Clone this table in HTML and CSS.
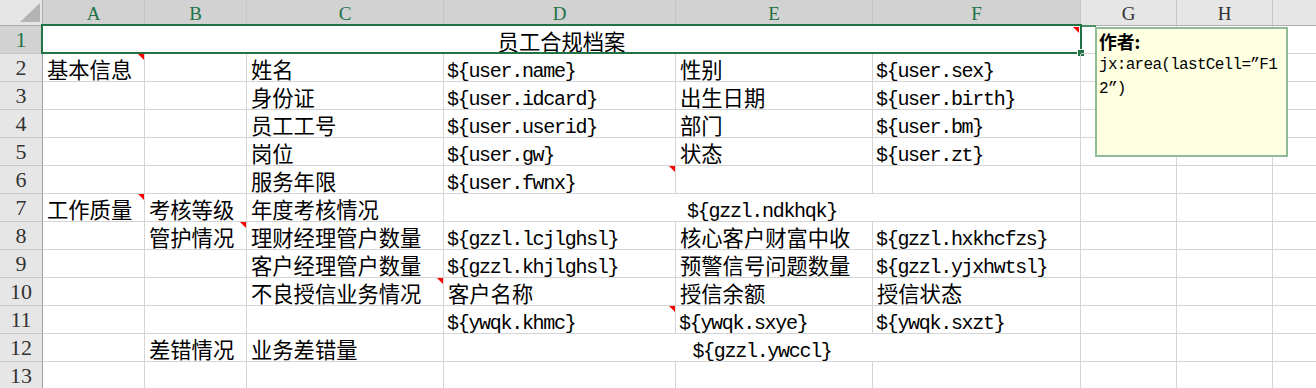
FILE: index.html
```html
<!DOCTYPE html>
<html lang="zh-CN">
<head>
<meta charset="utf-8">
<title>员工合规档案</title>
<link rel="stylesheet" href="styles.css">
</head>
<body>
<div class="sheet">
  <!-- header row -->
  <div class="corner"><span class="tri"></span></div>
  <div class="ch sel">A</div>
  <div class="ch sel">B</div>
  <div class="ch sel">C</div>
  <div class="ch sel">D</div>
  <div class="ch sel">E</div>
  <div class="ch sel">F</div>
  <div class="ch">G</div>
  <div class="ch">H</div>
  <div class="ch"></div>

  <!-- row 1 -->
  <div class="rh sel">1</div>
  <div class="cell t center span6 cm active">员工合规档案<span class="selbox"></span><span class="handle"></span></div>
  <div class="cell"></div><div class="cell"></div><div class="cell"></div>

  <!-- row 2 -->
  <div class="rh">2</div>
  <div class="cell t cm">基本信息</div>
  <div class="cell"></div>
  <div class="cell t">姓名</div>
  <div class="cell c">${user.name}</div>
  <div class="cell t">性别</div>
  <div class="cell c">${user.sex}</div>
  <div class="cell"></div><div class="cell"></div><div class="cell"></div>

  <!-- row 3 -->
  <div class="rh">3</div>
  <div class="cell"></div>
  <div class="cell"></div>
  <div class="cell t">身份证</div>
  <div class="cell c">${user.idcard}</div>
  <div class="cell t">出生日期</div>
  <div class="cell c">${user.birth}</div>
  <div class="cell"></div><div class="cell"></div><div class="cell"></div>

  <!-- row 4 -->
  <div class="rh">4</div>
  <div class="cell"></div>
  <div class="cell"></div>
  <div class="cell t">员工工号</div>
  <div class="cell c">${user.userid}</div>
  <div class="cell t">部门</div>
  <div class="cell c">${user.bm}</div>
  <div class="cell"></div><div class="cell"></div><div class="cell"></div>

  <!-- row 5 -->
  <div class="rh">5</div>
  <div class="cell"></div>
  <div class="cell"></div>
  <div class="cell t">岗位</div>
  <div class="cell c">${user.gw}</div>
  <div class="cell t">状态</div>
  <div class="cell c">${user.zt}</div>
  <div class="cell"></div><div class="cell"></div><div class="cell"></div>

  <!-- row 6 -->
  <div class="rh">6</div>
  <div class="cell"></div>
  <div class="cell"></div>
  <div class="cell t">服务年限</div>
  <div class="cell c cm">${user.fwnx}</div>
  <div class="cell"></div>
  <div class="cell"></div>
  <div class="cell"></div><div class="cell"></div><div class="cell"></div>

  <!-- row 7 -->
  <div class="rh">7</div>
  <div class="cell t cm">工作质量</div>
  <div class="cell t">考核等级</div>
  <div class="cell t">年度考核情况</div>
  <div class="cell c center span3">${gzzl.ndkhqk}</div>
  <div class="cell"></div><div class="cell"></div><div class="cell"></div>

  <!-- row 8 -->
  <div class="rh">8</div>
  <div class="cell"></div>
  <div class="cell t cm">管护情况</div>
  <div class="cell t">理财经理管户数量</div>
  <div class="cell c">${gzzl.lcjlghsl}</div>
  <div class="cell t">核心客户财富中收</div>
  <div class="cell c">${gzzl.hxkhcfzs}</div>
  <div class="cell"></div><div class="cell"></div><div class="cell"></div>

  <!-- row 9 -->
  <div class="rh">9</div>
  <div class="cell"></div>
  <div class="cell"></div>
  <div class="cell t">客户经理管户数量</div>
  <div class="cell c">${gzzl.khjlghsl}</div>
  <div class="cell t">预警信号问题数量</div>
  <div class="cell c">${gzzl.yjxhwtsl}</div>
  <div class="cell"></div><div class="cell"></div><div class="cell"></div>

  <!-- row 10 -->
  <div class="rh">10</div>
  <div class="cell"></div>
  <div class="cell"></div>
  <div class="cell t cm">不良授信业务情况</div>
  <div class="cell t">客户名称</div>
  <div class="cell t">授信余额</div>
  <div class="cell t">授信状态</div>
  <div class="cell"></div><div class="cell"></div><div class="cell"></div>

  <!-- row 11 -->
  <div class="rh">11</div>
  <div class="cell"></div>
  <div class="cell"></div>
  <div class="cell"></div>
  <div class="cell c cm">${ywqk.khmc}</div>
  <div class="cell c">${ywqk.sxye}</div>
  <div class="cell c">${ywqk.sxzt}</div>
  <div class="cell"></div><div class="cell"></div><div class="cell"></div>

  <!-- row 12 -->
  <div class="rh">12</div>
  <div class="cell"></div>
  <div class="cell t">差错情况</div>
  <div class="cell t">业务差错量</div>
  <div class="cell c center span3">${gzzl.ywccl}</div>
  <div class="cell"></div><div class="cell"></div><div class="cell"></div>

  <!-- row 13 -->
  <div class="rh">13</div>
  <div class="cell"></div><div class="cell"></div><div class="cell"></div>
  <div class="cell"></div><div class="cell"></div><div class="cell"></div>
  <div class="cell"></div><div class="cell"></div><div class="cell"></div>

  <!-- comment overlay -->
  <span class="connector"></span>
  <div class="comment">
    <div class="author">作者:</div>
    <div class="note">jx:area(lastCell=”F12”)</div>
  </div>
</div>
</body>
</html>
```

FILE: styles.css
```css
html, body {
  margin: 0;
  padding: 0;
  overflow: hidden;
  background: #ffffff;
}

.sheet {
  position: relative;
  display: grid;
  grid-template-columns: 43px 102px 102px 197px 232px 197px 208px 96px 96px 96px;
  grid-template-rows: 26px repeat(13, 28px);
  width: 1369px;
}

/* headers */
.corner {
  position: relative;
  background: #e6e6e6;
  border-right: 1px solid #ababab;
  border-bottom: 1px solid #ababab;
  box-sizing: border-box;
}
.corner .tri {
  position: absolute;
  right: 2px;
  bottom: 3px;
  width: 0;
  height: 0;
  border-left: 20px solid transparent;
  border-bottom: 19px solid #b4b4b4;
}

.ch, .rh {
  box-sizing: border-box;
  background: #e6e6e6;
  color: #333333;
  font-family: "Liberation Serif", serif;
  display: flex;
  align-items: center;
  justify-content: center;
}
.ch {
  font-size: 19px;
  border-right: 1px solid #c6c6c6;
  border-bottom: 1px solid #ababab;
  padding-top: 2px;
}
.rh {
  font-size: 22px;
  border-right: 1px solid #9f9f9f;
  border-bottom: 1px solid #c6c6c6;
  padding-top: 1px;
}
.ch.sel, .rh.sel {
  background: #d2d2d2;
  color: #217346;
}

/* cells */
.cell {
  position: relative;
  box-sizing: border-box;
  border-right: 1px solid #d4d4d4;
  border-bottom: 1px solid #d4d4d4;
  display: flex;
  align-items: flex-end;
  padding: 0 3px 0 4px;
  white-space: nowrap;
  color: #000000;
}
.cell.t {
  font-family: "Noto Sans CJK SC", sans-serif;
  font-size: 21.3px;
  line-height: 24px;
  padding-left: 4px;
}
.cell.c {
  font-family: "Liberation Mono", monospace;
  font-size: 20px;
  letter-spacing: -1.3px;
  line-height: 18px;
  padding-left: 3px;
}
.cell.center {
  justify-content: center;
  padding-left: 0;
  padding-right: 0;
}
.span6 { grid-column: span 6; }
.span3 { grid-column: span 3; }

/* red comment indicators */
.cm::after {
  content: "";
  position: absolute;
  top: 0;
  right: 0;
  width: 0;
  height: 0;
  border-top: 6px solid #ff0000;
  border-left: 6px solid transparent;
}

/* selection */
.selbox {
  position: absolute;
  left: -2px;
  top: -2px;
  right: -2px;
  bottom: -1px;
  border: 2px solid #217346;
  pointer-events: none;
}
.handle {
  position: absolute;
  right: -5px;
  bottom: -4px;
  width: 6px;
  height: 6px;
  background: #217346;
  border: 1px solid #ffffff;
}
.active.cm::after {
  right: 1px;
  top: 1px;
}

/* comment box */
.connector {
  position: absolute;
  left: 1082px;
  top: 25px;
  width: 14px;
  height: 2px;
  background: #4f8f63;
}
.comment {
  position: absolute;
  left: 1095px;
  top: 27px;
  width: 193px;
  height: 130px;
  box-sizing: border-box;
  background: #ffffe1;
  border: 2px solid #8fbb96;
  padding: 0 5px 0 2px;
  font-family: "Noto Sans CJK SC", sans-serif;
  font-size: 17.8px;
  line-height: 24px;
  color: #000000;
}
.author {
  font-weight: 700;
}
.note {
  font-family: "Liberation Mono", monospace;
  font-size: 16px;
  letter-spacing: -0.7px;
  word-break: break-all;
}
```
